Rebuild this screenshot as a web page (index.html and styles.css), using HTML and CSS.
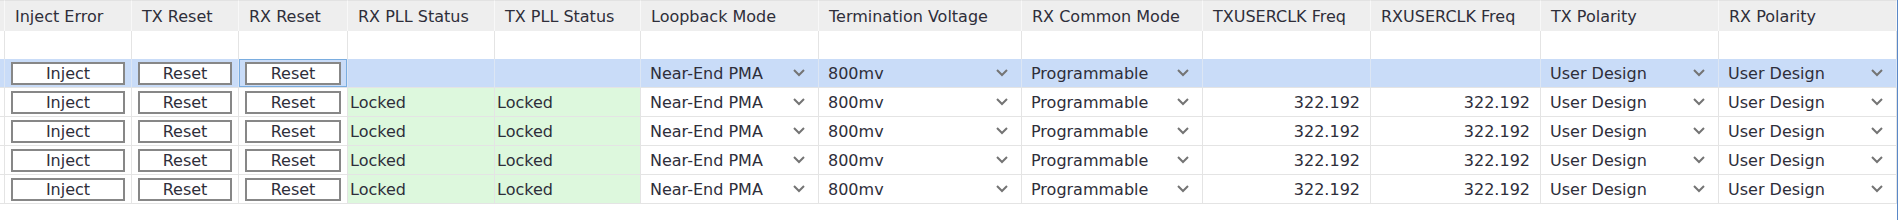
FILE: index.html
```html
<!DOCTYPE html>
<html lang="en">
<head>
  <meta charset="UTF-8">
  <title>Serial I/O Links</title>
  <link rel="stylesheet" href="styles.css">
</head>
<body>
  <div class="panel">
    <div class="grid">
      <!-- Header -->
      <div class="row head">
        <div class="cell"></div>
        <div class="cell">Inject Error</div>
        <div class="cell">TX Reset</div>
        <div class="cell">RX Reset</div>
        <div class="cell">RX PLL Status</div>
        <div class="cell">TX PLL Status</div>
        <div class="cell">Loopback Mode</div>
        <div class="cell">Termination Voltage</div>
        <div class="cell">RX Common Mode</div>
        <div class="cell">TXUSERCLK Freq</div>
        <div class="cell">RXUSERCLK Freq</div>
        <div class="cell">TX Polarity</div>
        <div class="cell">RX Polarity</div>
      </div>

      <!-- Filter row -->
      <div class="row filter">
        <div class="cell"></div><div class="cell"></div><div class="cell"></div><div class="cell"></div>
        <div class="cell"></div><div class="cell"></div><div class="cell"></div><div class="cell"></div>
        <div class="cell"></div><div class="cell"></div><div class="cell"></div><div class="cell"></div>
        <div class="cell"></div>
      </div>

      <!-- Group row (selected) -->
      <div class="row sel">
        <div class="cell"></div>
        <div class="cell btn-cell"><button class="btn">Inject</button></div>
        <div class="cell btn-cell"><button class="btn">Reset</button></div>
        <div class="cell btn-cell focus"><button class="btn">Reset</button></div>
        <div class="cell"></div>
        <div class="cell"></div>
        <div class="cell combo">Near-End PMA<svg class="chev" viewBox="0 0 12 8"><polyline points="1,1 6,6 11,1"/></svg></div>
        <div class="cell combo">800mv<svg class="chev" viewBox="0 0 12 8"><polyline points="1,1 6,6 11,1"/></svg></div>
        <div class="cell combo">Programmable<svg class="chev" viewBox="0 0 12 8"><polyline points="1,1 6,6 11,1"/></svg></div>
        <div class="cell"></div>
        <div class="cell"></div>
        <div class="cell combo">User Design<svg class="chev" viewBox="0 0 12 8"><polyline points="1,1 6,6 11,1"/></svg></div>
        <div class="cell combo">User Design<svg class="chev" viewBox="0 0 12 8"><polyline points="1,1 6,6 11,1"/></svg></div>
      </div>

      <div class="row">
        <div class="cell"></div>
        <div class="cell btn-cell"><button class="btn">Inject</button></div>
        <div class="cell btn-cell"><button class="btn">Reset</button></div>
        <div class="cell btn-cell"><button class="btn">Reset</button></div>
        <div class="cell locked">Locked</div>
        <div class="cell locked">Locked</div>
        <div class="cell combo">Near-End PMA<svg class="chev" viewBox="0 0 12 8"><polyline points="1,1 6,6 11,1"/></svg></div>
        <div class="cell combo">800mv<svg class="chev" viewBox="0 0 12 8"><polyline points="1,1 6,6 11,1"/></svg></div>
        <div class="cell combo">Programmable<svg class="chev" viewBox="0 0 12 8"><polyline points="1,1 6,6 11,1"/></svg></div>
        <div class="cell num">322.192</div>
        <div class="cell num">322.192</div>
        <div class="cell combo">User Design<svg class="chev" viewBox="0 0 12 8"><polyline points="1,1 6,6 11,1"/></svg></div>
        <div class="cell combo">User Design<svg class="chev" viewBox="0 0 12 8"><polyline points="1,1 6,6 11,1"/></svg></div>
      </div>

      <div class="row">
        <div class="cell"></div>
        <div class="cell btn-cell"><button class="btn">Inject</button></div>
        <div class="cell btn-cell"><button class="btn">Reset</button></div>
        <div class="cell btn-cell"><button class="btn">Reset</button></div>
        <div class="cell locked">Locked</div>
        <div class="cell locked">Locked</div>
        <div class="cell combo">Near-End PMA<svg class="chev" viewBox="0 0 12 8"><polyline points="1,1 6,6 11,1"/></svg></div>
        <div class="cell combo">800mv<svg class="chev" viewBox="0 0 12 8"><polyline points="1,1 6,6 11,1"/></svg></div>
        <div class="cell combo">Programmable<svg class="chev" viewBox="0 0 12 8"><polyline points="1,1 6,6 11,1"/></svg></div>
        <div class="cell num">322.192</div>
        <div class="cell num">322.192</div>
        <div class="cell combo">User Design<svg class="chev" viewBox="0 0 12 8"><polyline points="1,1 6,6 11,1"/></svg></div>
        <div class="cell combo">User Design<svg class="chev" viewBox="0 0 12 8"><polyline points="1,1 6,6 11,1"/></svg></div>
      </div>

      <div class="row">
        <div class="cell"></div>
        <div class="cell btn-cell"><button class="btn">Inject</button></div>
        <div class="cell btn-cell"><button class="btn">Reset</button></div>
        <div class="cell btn-cell"><button class="btn">Reset</button></div>
        <div class="cell locked">Locked</div>
        <div class="cell locked">Locked</div>
        <div class="cell combo">Near-End PMA<svg class="chev" viewBox="0 0 12 8"><polyline points="1,1 6,6 11,1"/></svg></div>
        <div class="cell combo">800mv<svg class="chev" viewBox="0 0 12 8"><polyline points="1,1 6,6 11,1"/></svg></div>
        <div class="cell combo">Programmable<svg class="chev" viewBox="0 0 12 8"><polyline points="1,1 6,6 11,1"/></svg></div>
        <div class="cell num">322.192</div>
        <div class="cell num">322.192</div>
        <div class="cell combo">User Design<svg class="chev" viewBox="0 0 12 8"><polyline points="1,1 6,6 11,1"/></svg></div>
        <div class="cell combo">User Design<svg class="chev" viewBox="0 0 12 8"><polyline points="1,1 6,6 11,1"/></svg></div>
      </div>

      <div class="row">
        <div class="cell"></div>
        <div class="cell btn-cell"><button class="btn">Inject</button></div>
        <div class="cell btn-cell"><button class="btn">Reset</button></div>
        <div class="cell btn-cell"><button class="btn">Reset</button></div>
        <div class="cell locked">Locked</div>
        <div class="cell locked">Locked</div>
        <div class="cell combo">Near-End PMA<svg class="chev" viewBox="0 0 12 8"><polyline points="1,1 6,6 11,1"/></svg></div>
        <div class="cell combo">800mv<svg class="chev" viewBox="0 0 12 8"><polyline points="1,1 6,6 11,1"/></svg></div>
        <div class="cell combo">Programmable<svg class="chev" viewBox="0 0 12 8"><polyline points="1,1 6,6 11,1"/></svg></div>
        <div class="cell num">322.192</div>
        <div class="cell num">322.192</div>
        <div class="cell combo">User Design<svg class="chev" viewBox="0 0 12 8"><polyline points="1,1 6,6 11,1"/></svg></div>
        <div class="cell combo">User Design<svg class="chev" viewBox="0 0 12 8"><polyline points="1,1 6,6 11,1"/></svg></div>
      </div>
    </div>
  </div>
</body>
</html>
```

FILE: styles.css
```css
/* Page */
body {
  margin: 0;
  background-color: #ffffff;
  font-family: "DejaVu Sans", sans-serif;
  font-size: 16px;
  color: #2e2e3a;
}
/* Panel with blue right edge */
.panel {
  width: 1897px;
  height: 220px;
  border-right: 1px solid #5a88c8;
  overflow: hidden;
}
/* Table grid */
.grid {
  display: grid;
  grid-template-columns: 5px 127px 107px 109px 147px 146px 178px 203px 181px 168px 170px 178px 178px;
}
.row {
  display: contents;
}
.cell {
  box-sizing: border-box;
  height: 29px;
  padding: 0 10px;
  display: flex;
  align-items: center;
  border-right: 1px solid #e4e4e4;
  border-bottom: 1px solid #e4e4e4;
  white-space: nowrap;
  overflow: hidden;
}
.row > .cell:first-child {
  padding: 0;
}
/* Header */
.head .cell {
  height: 31px;
  background-color: #eeeeee;
  border-right-color: #f8f8f8;
  border-bottom: none;
  border-top: 1px solid #e2e2e2;
}
.filter .cell {
  height: 28px;
  border-bottom: none;
}
/* Selected group row */
.sel .cell {
  background-color: #c9dcf8;
  border-right-color: #dce6f4;
}
.sel .cell.focus {
  box-shadow: inset 0 0 0 1px #7aade0;
}
/* Status */
.locked {
  background-color: #ddf8dd;
  padding-left: 2px;
}
.num {
  justify-content: flex-end;
}
/* Combo cells */
.combo {
  justify-content: space-between;
  padding-right: 13px;
  padding-left: 9px;
}
.chev {
  width: 12px;
  height: 8px;
  fill: none;
  stroke: #747474;
  stroke-width: 2;
}
/* Buttons */
.btn-cell {
  padding: 0 6px;
}
.btn {
  width: 100%;
  height: 23px;
  margin-top: 1px;
  padding: 0;
  background-color: #ffffff;
  border: 2px solid #878787;
  border-radius: 0;
  font-family: "DejaVu Sans", sans-serif;
  font-size: 16px;
  color: #2e2e3a;
  line-height: 18px;
}
```
